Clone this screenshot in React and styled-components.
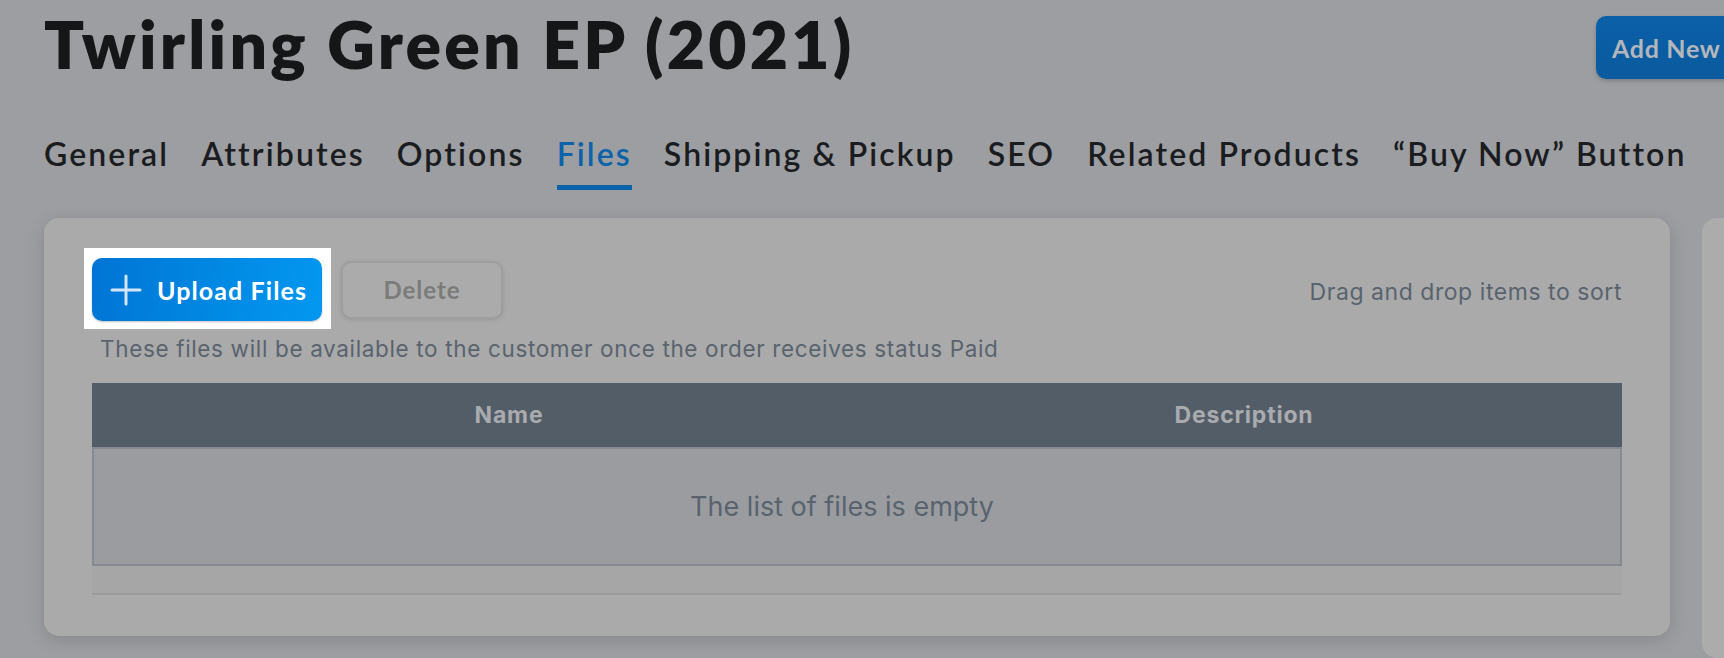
import React from 'react';
import styled, { createGlobalStyle } from 'styled-components';

const GlobalStyle = createGlobalStyle`
    html, body {
        margin: 0;
        padding: 0;
        background: #9d9ea1;
    }
    body {
        width: 1724px;
        height: 658px;
        overflow: hidden;
    }
`;

const tabs = ['General', 'Attributes', 'Options', 'Files', 'Shipping & Pickup', 'SEO', 'Related Products', '\u201CBuy Now\u201D Button'];

const App = () => {
    return (
        <>
            <GlobalStyle />
            <StyledPage>
                <StyledHeader>
                    <StyledTitle>Twirling Green EP (2021)</StyledTitle>
                    <StyledAddButton>Add New</StyledAddButton>
                </StyledHeader>

                <StyledTabs>
                    {tabs.map(tab => (
                        <StyledTab key={tab} $active={tab === 'Files'}>{tab}</StyledTab>
                    ))}
                </StyledTabs>

                <StyledCards>
                    <StyledCard>
                        <StyledToolbar>
                            <StyledHighlight>
                                <StyledUploadButton>
                                    <svg width="32" height="32" viewBox="0 0 32 32" fill="none">
                                        <path d="M16 2v28M2 16h28" stroke="#d3e6f7" strokeWidth="3" strokeLinecap="round" />
                                    </svg>
                                    Upload Files
                                </StyledUploadButton>
                            </StyledHighlight>
                            <StyledDeleteButton>Delete</StyledDeleteButton>
                            <StyledSortHint>Drag and drop items to sort</StyledSortHint>
                        </StyledToolbar>

                        <StyledNote>These files will be available to the customer once the order receives status Paid</StyledNote>

                        <StyledTable>
                            <StyledTableHead>
                                <span />
                                <span>Name</span>
                                <span>Description</span>
                            </StyledTableHead>
                            <StyledTableBody>
                                <p>The list of files is empty</p>
                            </StyledTableBody>
                            <StyledTableFoot />
                        </StyledTable>
                    </StyledCard>
                    <StyledSideCard />
                </StyledCards>
            </StyledPage>
        </>
    );
};

const StyledPage = styled.div`
    padding: 4px 0 0 44px;
    width: 1724px;
    height: 658px;
    box-sizing: border-box;
    overflow: hidden;
`;

const StyledHeader = styled.div`
    display: flex;
    align-items: flex-start;
    justify-content: space-between;
    margin-right: -60px;
`;

const StyledTitle = styled.h1`
    margin: 0;
    font-family: 'Lato', sans-serif;
    font-weight: 800;
    font-size: 66px;
    line-height: 80px;
    color: #141618;
    letter-spacing: 3.2px;
`;

const StyledAddButton = styled.button`
    margin-top: 12px;
    width: 188px;
    height: 63px;
    padding: 0 0 0 16px;
    border: none;
    border-radius: 10px;
    background: linear-gradient(180deg, #0b60a8, #0a5a9e);
    box-shadow: 0 2px 4px rgba(0, 0, 0, 0.2);
    color: #b3b7bb;
    font-family: 'Lato', sans-serif;
    font-weight: 700;
    font-size: 25px;
    letter-spacing: 0.7px;
    text-align: left;
    white-space: nowrap;
`;

const StyledTabs = styled.nav`
    display: flex;
    gap: 32px;
    margin-top: 50px;
`;

const StyledTab = styled.div`
    font-family: 'Lato', sans-serif;
    font-weight: 600;
    font-size: 32px;
    line-height: 40px;
    letter-spacing: 2.1px;
    padding-bottom: 11px;
    border-bottom: 5px solid ${props => props.$active ? '#0a62a8' : 'transparent'};
    color: ${props => props.$active ? '#0a62a8' : '#1a1c1f'};
    white-space: nowrap;
`;

const StyledCards = styled.div`
    display: flex;
    gap: 32px;
    margin-top: 28px;
`;

const StyledCard = styled.section`
    flex: none;
    width: 1626px;
    height: 418px;
    box-sizing: border-box;
    padding: 40px 48px;
    background: #aaaaaa;
    border-radius: 15px;
    box-shadow: 0 4px 18px rgba(0, 0, 0, 0.14);
`;

const StyledSideCard = styled.div`
    flex: none;
    width: 300px;
    height: 440px;
    background: #acacac;
    border-radius: 15px;
`;

const StyledToolbar = styled.div`
    display: flex;
    align-items: center;
    height: 63px;
`;

const StyledHighlight = styled.div`
    display: flex;
    background: #ffffff;
    padding: 10px 9px 8px 8px;
    margin: -10px -9px -8px -8px;
`;

const StyledUploadButton = styled.button`
    display: flex;
    align-items: center;
    gap: 15px;
    width: 230px;
    height: 63px;
    padding: 0 0 0 18px;
    border: none;
    border-radius: 10px;
    background: linear-gradient(100deg, #0174d4 0%, #0189e4 55%, #0398f0 100%);
    box-shadow: 0 1px 2px rgba(0, 0, 0, 0.25);
    color: #ffffff;
    font-family: 'Lato', sans-serif;
    font-weight: 700;
    font-size: 25px;
    letter-spacing: 1.1px;
    white-space: nowrap;
`;

const StyledDeleteButton = styled.button`
    margin-left: 19px;
    width: 162px;
    height: 58px;
    border: 2px solid #9e9e9e;
    border-radius: 10px;
    background: #ababab;
    box-shadow: 0 1px 4px rgba(0, 0, 0, 0.12);
    color: #7b7b7b;
    font-family: 'Lato', sans-serif;
    font-weight: 700;
    font-size: 24px;
    letter-spacing: 1px;
`;

const StyledSortHint = styled.span`
    margin-left: auto;
    padding-top: 4px;
    font-family: 'Inter', sans-serif;
    font-size: 23px;
    letter-spacing: 0.55px;
    color: #59636e;
`;

const StyledNote = styled.p`
    margin: 14px 0 0 8px;
    font-family: 'Inter', sans-serif;
    font-size: 22.5px;
    line-height: 28px;
    letter-spacing: 0.65px;
    color: #59636e;
`;

const StyledTable = styled.div`
    margin-top: 20px;
`;

const StyledTableHead = styled.div`
    display: grid;
    grid-template-columns: 60px 714px 1fr;
    align-items: center;
    height: 64px;
    background: #535d68;
    font-family: 'Inter', sans-serif;
    font-weight: 700;
    font-size: 23px;
    letter-spacing: 0.8px;
    color: #a9abae;
    text-align: center;
`;

const StyledTableBody = styled.div`
    display: flex;
    align-items: center;
    justify-content: center;
    height: 115px;
    padding-right: 30px;
    border: 2px solid #868a90;
    background: #9b9ca0;

    p {
        margin: 0;
        font-family: 'Inter', sans-serif;
        font-size: 27px;
        color: #59636e;
    }
`;

const StyledTableFoot = styled.div`
    height: 27px;
    background: #a6a6a6;
    border-bottom: 2px solid #9c9c9c;
`;

export default App;
